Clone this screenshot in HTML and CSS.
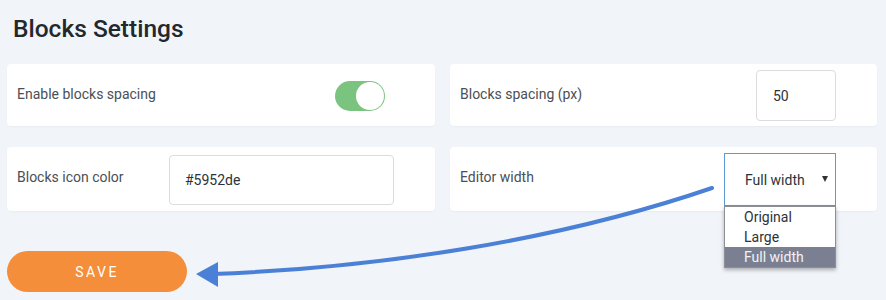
FILE: index.html
```html
<!DOCTYPE html>
<html lang="en">
<head>
  <meta charset="UTF-8" />
  <title>Blocks Settings</title>
  <link rel="stylesheet" href="styles.css">
</head>
<body>
  <div class="page">
    <h1 class="title">Blocks Settings</h1>

    <div class="settings-grid">
      <div class="card">
        <span class="card-label">Enable blocks spacing</span>
        <span class="toggle is-on"><span class="toggle-knob"></span></span>
      </div>

      <div class="card">
        <span class="card-label">Blocks spacing (px)</span>
        <input type="text" class="field field-small" value="50" />
      </div>

      <div class="card">
        <span class="card-label">Blocks icon color</span>
        <input type="text" class="field field-wide" value="#5952de" />
      </div>

      <div class="card">
        <span class="card-label">Editor width</span>
        <div class="select">
          <div class="select-box">
            <span>Full width</span>
            <span class="select-caret"></span>
          </div>
          <ul class="select-list">
            <li>Original</li>
            <li>Large</li>
            <li class="is-selected">Full width</li>
          </ul>
        </div>
      </div>
    </div>

    <button type="button" class="save-button">Save</button>
  </div>

  <!-- annotation arrow pointing from the select to the save button -->
  <svg class="annotation" width="886" height="300" viewBox="0 0 886 300">
    <path d="M712 188 C 560 240, 380 268, 212 274" fill="none" stroke="#4a80d5" stroke-width="4" stroke-linecap="round" />
    <polygon points="196,274 218,262 218,287" fill="#4a80d5" />
  </svg>
</body>
</html>
```

FILE: styles.css
```css
* { box-sizing: border-box; }
body { margin: 0; background: #f1f4f9; font-family: Roboto, "Liberation Sans", sans-serif; color: #2c3338; position: relative; }
.page { padding: 14px 9px 0 7px; }
.title { margin: 0 0 20px 6px; font-size: 24.5px; line-height: 30px; font-weight: 500; color: #23282d; }

.settings-grid { display: grid; grid-template-columns: 428px 427px; column-gap: 15px; row-gap: 21px; }
.card {
  display: flex; align-items: center; justify-content: space-between;
  background: #fff; border-radius: 4px; padding: 6px 41px 5px 10px;
  box-shadow: 0 1px 2px rgb(0 0 0 / 0.04);
}
.card-label { align-self: flex-start; margin-top: 14px; line-height: 20px; font-size: 14px; color: #4a4f55; }

.toggle { position: relative; width: 50px; height: 30px; border-radius: 15px; background: #7bc47f; margin-right: 9px; }
.toggle-knob { position: absolute; top: 1px; right: 1px; width: 28px; height: 28px; border-radius: 50%; background: #fff; }

.field { height: 51px; border: 1px solid #dcdcde; border-radius: 4px; font: 14px Roboto, "Liberation Sans", sans-serif; color: #2c3338; background: #fff; }
.field-small { width: 80px; padding-left: 16px; }
.field-wide { width: 225px; height: 50px; padding-left: 15px; }

.select { position: relative; width: 112px; }
.select-box {
  display: flex; align-items: center; justify-content: space-between;
  height: 53px; padding: 0 7px 0 20px; border: 1px solid #5b9bd5; background: #fff;
  font-size: 14px; color: #2c3338;
}
.select-caret { width: 0; height: 0; border-left: 3.5px solid transparent; border-right: 3.5px solid transparent; border-top: 6px solid #333; margin-top: -2px; }
.select-list {
  position: absolute; top: 100%; left: 0; width: 112px; margin: 0; padding: 0; list-style: none;
  background: #fff; border: 1px solid #8c8f94; box-shadow: 0 2px 4px rgb(0 0 0 / 0.3);
  font-size: 14px; color: #2c3338; z-index: 2;
}
.select-list li { height: 20px; line-height: 20px; padding-left: 19px; }
.select-list li.is-selected { background: #7a8092; color: #f2f2f2; }

.save-button {
  display: block; margin-top: 40px; width: 180px; height: 41px; border: none; border-radius: 21px;
  background: #f58e3a; color: #fff; font: 14px Roboto, "Liberation Sans", sans-serif;
  letter-spacing: 2.5px; text-transform: uppercase; cursor: pointer;
}

.annotation { position: absolute; top: 0; left: 0; pointer-events: none; z-index: 3; }
```
